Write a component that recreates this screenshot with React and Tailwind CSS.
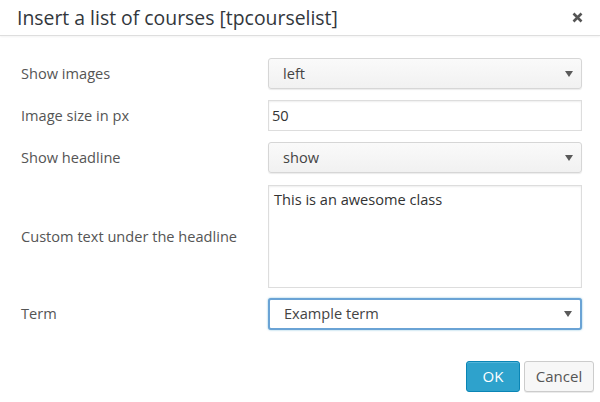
import React from "react";

const font = { fontFamily: '"Open Sans", "Noto Sans", sans-serif' };

function Arrow() {
  return (
    <svg width="8" height="6" viewBox="0 0 8 6" className="shrink-0">
      <path d="M0 0h8L4 6z" fill="#5a5a5a" />
    </svg>
  );
}

function SelectBox({ value, focused = false, h = "h-[31px]" }) {
  return (
    <div
      className={`${h} w-[314px] flex items-center justify-between pl-[14px] pr-[8px] rounded-[3px] text-[14.6px] text-[#444] ${
        focused
          ? "border-2 border-[#6aa3d5] bg-white shadow-[0_0_2px_rgba(30,140,190,0.6)]"
          : "border border-[#d6d6d6] bg-gradient-to-b from-[#fafafa] to-[#f1f1f1] shadow-[0_1px_1px_rgba(0,0,0,0.08)]"
      }`}
    >
      <span>{value}</span>
      <Arrow />
    </div>
  );
}

function Row({ label, children, className = "" }) {
  return (
    <div className={`flex items-center ${className}`}>
      <div className="w-[247px] text-[14.6px] text-[#555]">{label}</div>
      {children}
    </div>
  );
}

export default function App() {
  return (
    <div className="w-[600px] h-[402px] bg-white flex flex-col" style={font}>
      <div className="h-[36px] flex items-center justify-between pl-[17px] pr-[17px] border-b border-[#dedede] shadow-[0_1px_2px_rgba(0,0,0,0.05)]">
        <span className="text-[19.4px] text-[#32373c]">Insert a list of courses [tpcourselist]</span>
        <svg width="11" height="11" viewBox="0 0 11 11">
          <path d="M1.5 1.5l8 8M9.5 1.5l-8 8" stroke="#555" strokeWidth="2.6" strokeLinecap="butt" />
        </svg>
      </div>

      <div className="flex flex-col pl-[21px] pt-[22px]">
        <Row label="Show images">
          <SelectBox value="left" />
        </Row>
        <Row label="Image size in px" className="mt-[11px]">
          <div className="h-[31px] w-[314px] flex items-center pl-[3px] border border-[#dddddd] bg-white text-[14.6px] text-[#333] shadow-[inset_0_1px_2px_rgba(0,0,0,0.07)]">
            50
          </div>
        </Row>
        <Row label="Show headline" className="mt-[11px]">
          <SelectBox value="show" />
        </Row>
        <Row label="Custom text under the headline" className="mt-[12px]">
          <div className="h-[103px] w-[314px] pl-[5px] pt-[3px] border border-[#dddddd] bg-white text-[14.6px] text-[#333] shadow-[inset_0_1px_2px_rgba(0,0,0,0.07)]">
            This is an awesome class
          </div>
        </Row>
        <Row label="Term" className="mt-[10px]">
          <SelectBox value="Example term" focused h="h-[32px]" />
        </Row>
      </div>

      <div className="flex justify-end gap-[4px] pr-[6px] mt-[31px]">
        <button className="h-[31px] w-[54px] rounded-[3px] bg-[#2ea2cc] border border-[#0a85b5] text-white text-[15px] shadow-[inset_0_1px_0_rgba(120,200,230,0.5)]">
          OK
        </button>
        <button className="h-[31px] w-[70px] rounded-[3px] bg-[#f7f7f7] border border-[#cccccc] text-[#555] text-[15px] shadow-[0_1px_0_rgba(0,0,0,0.08)]">
          Cancel
        </button>
      </div>
    </div>
  );
}
